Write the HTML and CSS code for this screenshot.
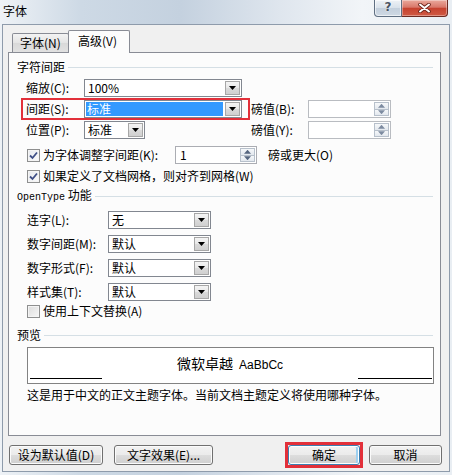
FILE: index.html
```html
<!DOCTYPE html>
<html lang="zh-CN">
<head>
<meta charset="utf-8">
<title>字体</title>
<link rel="stylesheet" href="styles.css">
</head>
<body>
<div class="win">
  <div class="titlebar">
    <span class="title">字体</span>
    <div class="caption-btns">
      <div class="cbtn help">?</div>
      <div class="cbtn close"><svg width="13" height="10" viewBox="0 0 13 10"><path d="M2 1.5L11 8.5M11 1.5L2 8.5" stroke="#6a231a" stroke-width="3.6" stroke-linecap="round"/><path d="M2 1.5L11 8.5M11 1.5L2 8.5" stroke="#fff" stroke-width="2" stroke-linecap="round"/></svg></div>
    </div>
  </div>
  <div class="client">
    <div class="tabs">
      <div class="tab">字体(N)</div>
      <div class="tab active">高级(V)</div>
    </div>
    <div class="panel">
      <div class="group-h"><span>字符间距</span><i class="rule"></i></div>

      <div class="frow r-first">
        <span class="lbl">缩放(C):</span>
        <div class="combo"><span class="val">100%</span><span class="drop"></span></div>
      </div>

      <div class="frow">
        <span class="lbl">间距(S):</span>
        <div class="combo"><span class="val sel">标准</span><span class="drop"></span></div>
        <span class="lbl right">磅值(B):</span>
        <div class="spin disabled"><span class="val"></span><span class="spinbtn"><i class="up"></i><i class="dn"></i></span></div>
        <span class="mark mark-row"></span>
      </div>

      <div class="frow">
        <span class="lbl">位置(P):</span>
        <div class="combo short"><span class="val">标准</span><span class="drop"></span></div>
        <span class="lbl right">磅值(Y):</span>
        <div class="spin disabled"><span class="val"></span><span class="spinbtn"><i class="up"></i><i class="dn"></i></span></div>
      </div>

      <div class="crow c-first">
        <label class="chk"><span class="cb on"><svg width="11" height="11" viewBox="0 0 11 11"><path d="M2 5.5L4.5 8L9 2.5" fill="none" stroke="#3f4f86" stroke-width="1.8"/></svg></span>为字体调整字间距(K):</label>
        <div class="spin"><span class="val">1</span><span class="spinbtn"><i class="up"></i><i class="dn"></i></span></div>
        <span class="after">磅或更大(O)</span>
      </div>

      <div class="crow">
        <label class="chk"><span class="cb on"><svg width="11" height="11" viewBox="0 0 11 11"><path d="M2 5.5L4.5 8L9 2.5" fill="none" stroke="#3f4f86" stroke-width="1.8"/></svg></span>如果定义了文档网格，则对齐到网格(W)</label>
      </div>

      <div class="group-h g-ot"><span><span class="mono">OpenType</span> 功能</span><i class="rule"></i></div>

      <div class="orow o-first">
        <span class="lbl">连字(L):</span>
        <div class="combo"><span class="val">无</span><span class="drop"></span></div>
      </div>
      <div class="orow">
        <span class="lbl">数字间距(M):</span>
        <div class="combo"><span class="val">默认</span><span class="drop"></span></div>
      </div>
      <div class="orow">
        <span class="lbl">数字形式(F):</span>
        <div class="combo"><span class="val">默认</span><span class="drop"></span></div>
      </div>
      <div class="orow">
        <span class="lbl">样式集(T):</span>
        <div class="combo"><span class="val">默认</span><span class="drop"></span></div>
      </div>

      <div class="crow c-ctx">
        <label class="chk"><span class="cb"></span>使用上下文替换(A)</label>
      </div>

      <div class="group-h g-pv"><span>预览</span><i class="rule"></i></div>

      <div class="preview">
        <i class="pl"></i>
        <span class="ptext">微软卓越 <span class="latin">AaBbCc</span></span>
        <i class="pl pr"></i>
      </div>

      <div class="desc">这是用于中文的正文主题字体。当前文档主题定义将使用哪种字体。</div>
    </div>

    <div class="btnrow">
      <div class="btn b-def">设为默认值(D)</div>
      <div class="btn b-eff">文字效果(E)...</div>
      <div class="spacer"></div>
      <div class="btn b-ok default">确定<span class="mark mark-ok"></span></div>
      <div class="btn b-cancel">取消</div>
    </div>
  </div>
</div>
</body>
</html>
```

FILE: styles.css
```css
* { box-sizing: border-box; }
html, body { margin: 0; padding: 0; }
body {
  width: 452px;
  height: 475px;
  overflow: hidden;
  font-family: "Noto Sans CJK SC", "Noto Sans", sans-serif;
  font-size: 12px;
  line-height: 14px;
  color: #000;
  background: linear-gradient(90deg, #eef2f6 0%, #cdd9e5 18%, #c4d1df 40%, #dfe6ee 62%, #f2f5f8 80%, #e9eef3 100%);
}
.win { width: 452px; height: 475px; display: flex; flex-direction: column; }

/* title bar */
.titlebar {
  height: 24px;
  flex: none;
  display: flex;
  justify-content: space-between;
  align-items: flex-start;
  padding: 0 4px 0 3px;
}
.title { margin-top: 4px; font-size: 12px; line-height: 14px; color: #000; }
.caption-btns { display: flex; }
.cbtn { height: 17px; border: 1px solid #5f6f82; border-top: none; }
.help {
  width: 28px;
  border-radius: 0 0 0 4px;
  background: linear-gradient(#eef2f6, #d8e1ea 50%, #c3cfdc 51%, #cfd9e4);
  color: #4a5563;
  font: bold 12px/15px "DejaVu Sans", sans-serif;
  text-align: center;
  text-shadow: 0 0 2px #fff;
  box-shadow: inset 0 0 0 1px rgba(255,255,255,0.6);
}
.close {
  width: 46px;
  border-left: none;
  border-color: #6b2a22;
  border-radius: 0 0 4px 0;
  background: linear-gradient(#eaa99c 0%, #d9786a 45%, #c6422f 52%, #cf5a44 100%);
  display: flex;
  align-items: center;
  justify-content: center;
  box-shadow: inset 0 0 0 1px rgba(255,255,255,0.35);
}

/* client area */
.client {
  flex: 1;
  margin: 0 2px 3px;
  border: 1px solid #8e9bab;
  background: #f0f0f0;
  display: flex;
  flex-direction: column;
}
.tabs {
  height: 22px;
  margin-top: 5px;
  padding-left: 9px;
  display: flex;
  align-items: flex-end;
  position: relative;
  z-index: 1;
}
.tab {
  height: 19px;
  border: 1px solid #898c95;
  border-bottom: none;
  border-radius: 2px 2px 0 0;
  background: linear-gradient(#f3f3f3, #e4e4e4 50%, #d9d9d9 51%, #e1e1e1);
  padding: 2px 0 0 7px;
  width: 57px;
  line-height: 14px;
}
.tab.active {
  height: 23px;
  width: 62px;
  margin-left: -1px;
  margin-bottom: -1px;
  background: #fcfcfc;
  padding: 3px 0 0 9px;
}
.panel {
  margin-left: 5px;
  width: 433px;
  height: 384px;
  border: 1px solid #898c95;
  background: #fcfcfc;
  flex: none;
}

/* group headers */
.group-h {
  height: 14px;
  margin-top: 7px;
  padding: 0 7px 0 8px;
  display: flex;
  align-items: center;
}
.group-h .rule { flex: 1; height: 0; border-top: 1px solid #d5dfe5; margin-left: 3px; }
.g-ot { margin-top: 4px; }
.g-pv { margin-top: 8px; }
.mono { font-family: "Liberation Mono", monospace; font-size: 10px; }

/* form rows */
.frow {
  position: relative;
  height: 18px;
  margin-top: 3px;
  padding-left: 17px;
  display: grid;
  grid-template-columns: 58px 158px 66px 83px;
  align-items: center;
}
.frow.r-first { margin-top: 5px; }
.lbl { white-space: nowrap; }
.lbl.right { padding-left: 9px; }

.combo {
  height: 18px;
  border: 1px solid #828790;
  background: #fff;
  padding: 1px;
  display: flex;
  align-items: stretch;
}
.combo.short { width: 61px; }
.combo .val { flex: 1; padding-left: 2px; line-height: 14px; white-space: nowrap; }
.combo .val.sel { background: #3399ff; color: #fff; margin-right: 2px; padding-left: 1px; }
.drop {
  width: 15px;
  flex: none;
  border: 1px solid #a7a7a7;
  background: linear-gradient(#f4f4f4, #e8e8e8 50%, #dadada 51%, #d0d0d0);
  display: flex;
  align-items: center;
  justify-content: center;
}
.drop::after {
  content: "";
  width: 7px;
  height: 4px;
  background: #000;
  clip-path: polygon(0 0, 100% 0, 50% 100%);
}

.spin {
  height: 18px;
  border: 1px solid #abadb3;
  background: #fff;
  padding: 1px;
  display: flex;
}
.spin.disabled { border-color: #b9bcc1; }
.spin .val { flex: 1; padding-left: 3px; line-height: 14px; }
.spinbtn { width: 15px; flex: none; display: flex; flex-direction: column; }
.spinbtn i {
  flex: 1;
  border: 1px solid #b7c0cb;
  background: linear-gradient(#f6f8fa, #e3e8ee);
  display: flex;
  align-items: center;
  justify-content: center;
}
.spinbtn i.dn { border-top: none; }
.spinbtn i::after {
  content: "";
  width: 7px;
  height: 4px;
  background: #56667f;
}
.spinbtn i.up::after { clip-path: polygon(50% 0, 100% 100%, 0 100%); }
.spinbtn i.dn::after { clip-path: polygon(0 0, 100% 0, 50% 100%); }
.spin.disabled .spinbtn i::after { background: #7d8ba0; }

.mark { position: absolute; border: 2px solid #e2303a; pointer-events: none; }
.mark-row { left: 12px; top: -2px; width: 229px; height: 22px; }

/* checkbox rows */
.crow {
  height: 18px;
  margin-top: 3px;
  padding-left: 18px;
  display: grid;
  grid-template-columns: 148px 82px auto;
  align-items: center;
}
.crow.c-first { margin-top: 7px; }
.crow.c-ctx { margin-top: 1px; }
.crow .after { padding-left: 11px; white-space: nowrap; }
.chk { display: flex; align-items: center; gap: 3px; white-space: nowrap; }
.cb {
  width: 13px;
  height: 13px;
  flex: none;
  border: 1px solid #8e8f8f;
  background: linear-gradient(135deg, #dcdcdc, #f6f6f6);
  box-shadow: inset 0 0 0 1px #f4f4f4;
  display: flex;
  align-items: center;
  justify-content: center;
}
.cb.on { background: linear-gradient(135deg, #e6e9ee, #fbfbfb); }
.cb svg { display: block; }

/* OpenType rows */
.orow {
  height: 18px;
  margin-top: 6px;
  padding-left: 18px;
  display: grid;
  grid-template-columns: 81px 103px;
  align-items: center;
}
.orow.o-first { margin-top: 8px; }

/* preview */
.preview {
  margin: 5px 0 0 18px;
  width: 407px;
  height: 37px;
  border: 1px solid #828282;
  background: #fff;
  display: flex;
  align-items: flex-end;
  padding: 0 1px 4px 2px;
}
.pl { width: 72px; height: 0; border-top: 1px solid #000; flex: none; }
.pl.pr { width: 74px; }
.ptext {
  flex: 1;
  align-self: center;
  text-align: center;
  font-size: 14px;
  line-height: 16px;
  padding-top: 1px;
}
.latin { font-family: "Liberation Sans", sans-serif; font-size: 12px; margin-left: 3px; }
.desc { margin-top: 4px; padding-left: 18px; height: 14px; white-space: nowrap; }

/* buttons */
.btnrow {
  margin-top: 9px;
  height: 20px;
  padding: 0 7px 0 6px;
  display: flex;
  gap: 11px;
}
.spacer { flex: 1; }
.btn {
  position: relative;
  height: 20px;
  border: 1px solid #707070;
  border-radius: 3px;
  background: linear-gradient(#f2f2f2 0%, #ebebeb 50%, #dddddd 51%, #cfcfcf 100%);
  box-shadow: inset 0 0 0 1px #fbfbfb;
  display: flex;
  align-items: center;
  justify-content: center;
  white-space: nowrap;
}
.b-def { width: 94px; }
.b-eff { width: 99px; }
.b-ok { width: 72px; margin-right: -2px; }
.b-cancel { width: 73px; }
.btn.default {
  border-color: #3c7fb1;
  box-shadow: inset 0 0 0 1px #fff, inset -2px 0 0 1px #9ed0f0;
}
.mark-ok { left: -4px; top: -4px; right: -4px; bottom: -4px; border-width: 3px; border-radius: 0; }
```
